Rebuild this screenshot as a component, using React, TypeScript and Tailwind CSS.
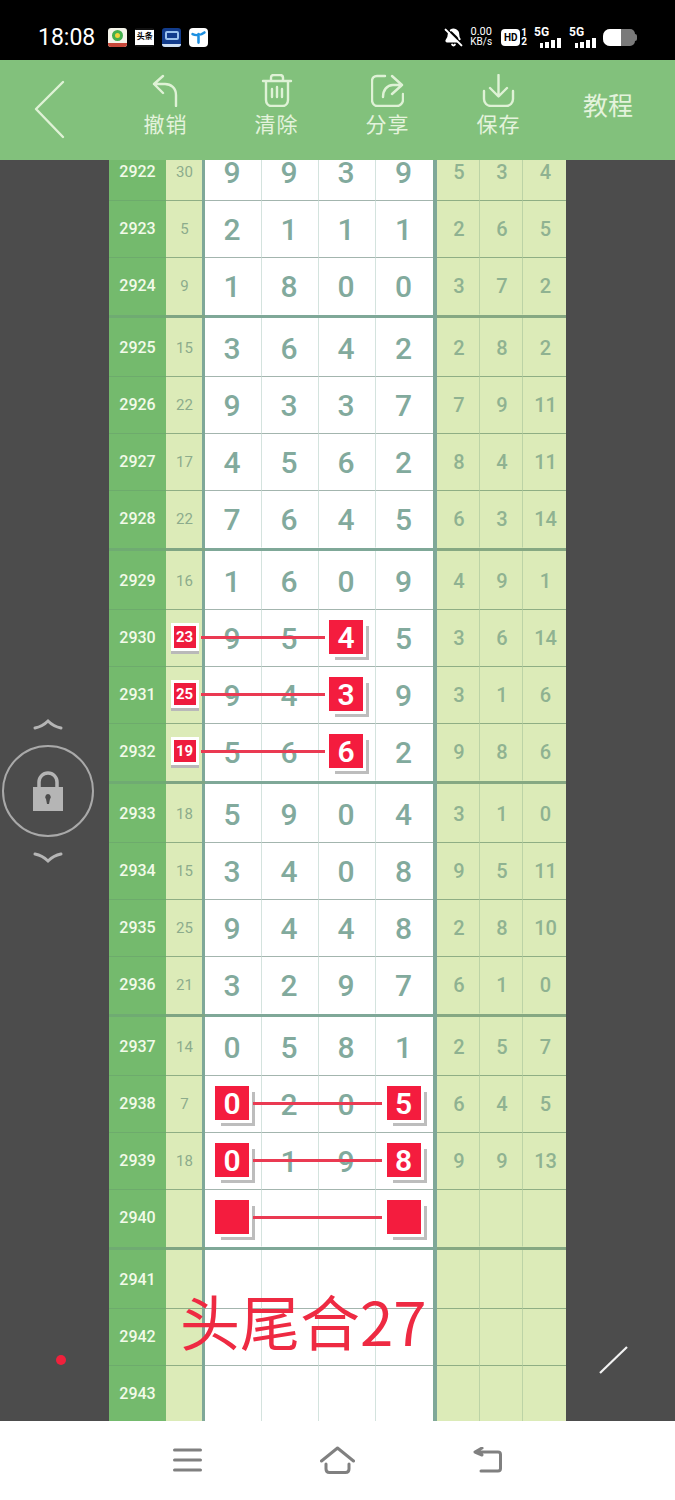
import { BellOff } from "lucide-react"

type Row = {
  id: number
  sum?: string
  nums?: string[]
  right?: string[]
  sumMark?: boolean
  marks?: number[]
  line?: string
}

const L1 = "left-[92px] w-[124px]"
const L2 = "left-[144px] w-[129px]"

const groups: Row[][] = [
  [
    { id: 2922, sum: "30", nums: ["9", "9", "3", "9"], right: ["5", "3", "4"] },
    { id: 2923, sum: "5", nums: ["2", "1", "1", "1"], right: ["2", "6", "5"] },
    { id: 2924, sum: "9", nums: ["1", "8", "0", "0"], right: ["3", "7", "2"] },
  ],
  [
    { id: 2925, sum: "15", nums: ["3", "6", "4", "2"], right: ["2", "8", "2"] },
    { id: 2926, sum: "22", nums: ["9", "3", "3", "7"], right: ["7", "9", "11"] },
    { id: 2927, sum: "17", nums: ["4", "5", "6", "2"], right: ["8", "4", "11"] },
    { id: 2928, sum: "22", nums: ["7", "6", "4", "5"], right: ["6", "3", "14"] },
  ],
  [
    { id: 2929, sum: "16", nums: ["1", "6", "0", "9"], right: ["4", "9", "1"] },
    { id: 2930, sum: "23", nums: ["9", "5", "4", "5"], right: ["3", "6", "14"], sumMark: true, marks: [2], line: L1 },
    { id: 2931, sum: "25", nums: ["9", "4", "3", "9"], right: ["3", "1", "6"], sumMark: true, marks: [2], line: L1 },
    { id: 2932, sum: "19", nums: ["5", "6", "6", "2"], right: ["9", "8", "6"], sumMark: true, marks: [2], line: L1 },
  ],
  [
    { id: 2933, sum: "18", nums: ["5", "9", "0", "4"], right: ["3", "1", "0"] },
    { id: 2934, sum: "15", nums: ["3", "4", "0", "8"], right: ["9", "5", "11"] },
    { id: 2935, sum: "25", nums: ["9", "4", "4", "8"], right: ["2", "8", "10"] },
    { id: 2936, sum: "21", nums: ["3", "2", "9", "7"], right: ["6", "1", "0"] },
  ],
  [
    { id: 2937, sum: "14", nums: ["0", "5", "8", "1"], right: ["2", "5", "7"] },
    { id: 2938, sum: "7", nums: ["0", "2", "0", "5"], right: ["6", "4", "5"], marks: [0, 3], line: L2 },
    { id: 2939, sum: "18", nums: ["0", "1", "9", "8"], right: ["9", "9", "13"], marks: [0, 3], line: L2 },
    { id: 2940, nums: ["", "", "", ""], marks: [0, 3], line: L2 },
  ],
  [{ id: 2941 }, { id: 2942 }, { id: 2943 }],
]

function TableRow({ row, last }: { row: Row; last: boolean }) {
  const nums = row.nums ?? ["", "", "", ""]
  const right = row.right ?? ["", "", ""]
  const lineG = last ? "border-b border-transparent" : "border-b border-[#8fae84]"
  const lineW = last ? "border-b border-transparent" : "border-b border-[#a3b5ae]"
  return (
    <div className="relative flex h-[57px]">
      <div className={`flex w-[57px] items-center justify-center bg-[#74ba6d] text-[16px] font-medium text-[#f2fae9] ${last ? "border-b border-transparent" : "border-b border-[#6dab6c]"}`}>
        {row.id}
      </div>
      <div className={`flex w-[36px] items-center justify-center bg-[#dcebb8] pl-[1px] text-[15px] text-[#8cab8c] ${lineG}`}>
        {row.sumMark ? (
          <div className="mb-[2px] flex h-[22px] w-[22px] items-center justify-center bg-[#ee1c3d] text-[15px] font-bold text-white shadow-[0_0_0_3px_#fff,0_3px_0_3px_#b9b9b9]">
            {row.sum}
          </div>
        ) : (
          row.sum
        )}
      </div>
      <div className="grid w-[235px] grid-cols-4 border-l-[3px] border-r-[4px] border-[#7fa898] bg-white">
        {nums.map((n, i) => (
          <div key={i} className={`flex items-center justify-center pr-[2px] text-[30px] font-medium text-[#82aa9d] ${lineW} ${i < 3 ? "border-r border-r-[#d4e3de]" : ""}`}>
            {row.marks?.includes(i) ? (
              <div className="mb-[2px] flex h-[34px] w-[34px] items-center justify-center bg-[#f41c3e] text-[30px] font-semibold text-white shadow-[3px_3px_0_0_#fff,6px_6px_0_0_#bdbdbd]">
                {n}
              </div>
            ) : (
              n
            )}
          </div>
        ))}
      </div>
      <div className="grid w-[129px] grid-cols-3 bg-[#dcebb8]">
        {right.map((n, i) => (
          <div key={i} className={`flex items-center justify-center pl-[2px] text-[20px] font-medium text-[#8fb291] ${lineG} ${i < 2 ? "border-r border-r-[#bcd3a6]" : ""}`}>
            {n}
          </div>
        ))}
      </div>
      {row.line && <div className={`absolute top-[26px] h-[3px] bg-[#ea3a52] ${row.line}`} />}
    </div>
  )
}

function Separator() {
  return (
    <div>
      <div className="flex h-[3px]">
        <div className="w-[57px] bg-[#6fab72]" />
        <div className="w-[39px] bg-[#7fa583]" />
        <div className="w-[232px] bg-[#7fa898]" />
        <div className="w-[129px] bg-[#86a882]" />
      </div>
      <div className="flex h-[2px]">
        <div className="w-[57px] bg-[#74ba6d]" />
        <div className="w-[36px] bg-[#dcebb8]" />
        <div className="grid w-[235px] grid-cols-4 border-l-[3px] border-r-[4px] border-[#7fa898] bg-white">
          <div className="border-r border-[#d4e3de]" />
          <div className="border-r border-[#d4e3de]" />
          <div className="border-r border-[#d4e3de]" />
          <div />
        </div>
        <div className="grid w-[129px] grid-cols-3 bg-[#dcebb8]">
          <div className="border-r border-[#bcd3a6]" />
          <div className="border-r border-[#bcd3a6]" />
          <div />
        </div>
      </div>
    </div>
  )
}

function AppIcons() {
  return (
    <div className="ml-[13px] flex gap-[8px]">
      <div className="flex h-[19px] w-[19px] flex-col items-center justify-between overflow-hidden rounded-[3px] bg-[#f4f4ea] pt-[2px]">
        <div className="h-[11px] w-[11px] rounded-full border-[3px] border-[#45b04e] bg-[#f2d23a]" />
        <div className="h-[4px] w-full bg-[#c8483a]" />
      </div>
      <div className="flex h-[19px] w-[19px] items-center justify-center overflow-hidden rounded-[2px] border-y-2 border-[#111] bg-white text-[8px] font-bold leading-none text-black">
        头条
      </div>
      <div className="flex h-[19px] w-[19px] flex-col items-center justify-between overflow-hidden rounded-[3px] bg-[#123c8c] pt-[3px]">
        <div className="h-[9px] w-[14px] rounded-[2px] border-2 border-[#9cc3ee]" />
        <div className="h-[3px] w-full bg-[#cfe0f5]" />
      </div>
      <div className="flex h-[19px] w-[19px] items-center justify-center rounded-[4px] bg-white">
        <svg viewBox="0 0 20 20" className="h-[17px] w-[17px]" fill="none" stroke="#1d8fe0" strokeWidth="3" strokeLinecap="round">
          <path d="M3 6c4 2 10 1 14-2M10 6v10" />
        </svg>
      </div>
    </div>
  )
}

function Signal() {
  return (
    <div className="flex w-[27px] flex-col">
      <span className="text-[12px] font-bold leading-[11px] text-white">5G</span>
      <div className="flex items-end justify-end gap-[2px]">
        <div className="h-[5px] w-[3px] bg-white" />
        <div className="h-[6px] w-[4px] bg-white" />
        <div className="h-[8px] w-[4px] bg-white" />
        <div className="h-[10px] w-[4px] bg-white" />
      </div>
    </div>
  )
}

function StatusBar() {
  return (
    <div className="flex h-[60px] items-center bg-black pl-[38px] pr-[38px] pt-[14px] text-white">
      <span className="text-[23px] leading-none">18:08</span>
      <AppIcons />
      <div className="ml-auto flex items-center">
        <BellOff size={19} fill="#fff" strokeWidth={2.5} />
        <div className="ml-[6px] w-[24px] text-center text-[10px] leading-[10px]">
          <div className="text-[11px]">0.00</div>
          <div>KB/s</div>
        </div>
        <div className="ml-[8px] flex h-[17px] w-[19px] items-center justify-center rounded-[4px] bg-white text-[10px] font-bold text-black">HD</div>
        <div className="ml-[1px] mr-[7px] text-[10px] font-bold leading-[9px]">
          <div>1</div>
          <div>2</div>
        </div>
        <Signal />
        <div className="w-[8px]" />
        <Signal />
        <div className="ml-[7px] flex h-[17px] w-[32px] overflow-hidden rounded-l-[7px] rounded-r-[5px] bg-[#7a7a7a]">
          <div className="w-[18px] bg-white" />
        </div>
        <div className="h-[7px] w-[2px] rounded-r-sm bg-[#7a7a7a]" />
      </div>
    </div>
  )
}

function ToolButton({ label, children }: { label: string; children: React.ReactNode }) {
  return (
    <div className="flex w-[111px] flex-col items-center pb-[8px]">
      {children}
      <span className="mt-[5px] text-[21px] leading-[26px] tracking-[1px]">{label}</span>
    </div>
  )
}

const iconProps = {
  fill: "none",
  stroke: "#dff2d6",
  strokeWidth: 2.4,
  strokeLinecap: "round" as const,
  strokeLinejoin: "round" as const,
}

function Header() {
  return (
    <div className="flex h-[100px] items-center bg-[#82c17c] text-[#e4f3dc]">
      <div className="w-[110px] pl-[33px]">
        <svg width="34" height="60" viewBox="0 0 34 60" {...iconProps}>
          <path d="M30 2 3 29l27 28" />
        </svg>
      </div>
      <ToolButton label="撤销">
        <svg width="30" height="33" viewBox="0 0 30 33" {...iconProps}>
          <path d="M12 2 3 10l9 9M3 10h11c6 0 11 4 11 11v11" />
        </svg>
      </ToolButton>
      <ToolButton label="清除">
        <svg width="32" height="33" viewBox="0 0 32 33" {...iconProps}>
          <path d="M2 7h28M10 7V4c0-2 1-3 3-3h6c2 0 3 1 3 3v3M5 7v19c0 3 2 6 5 6h12c3 0 5-3 5-6V7M11 15v8M16 13v10M21 15v8" />
        </svg>
      </ToolButton>
      <ToolButton label="分享">
        <svg width="33" height="33" viewBox="0 0 33 33" {...iconProps}>
          <path d="M14 2H6C3 2 1 4 1 7v19c0 3 2 6 5 6h20c3 0 6-3 6-6v-6M21 2l10 9-10 9M31 11h-9c-6 0-10 5-10 12" />
        </svg>
      </ToolButton>
      <ToolButton label="保存">
        <svg width="33" height="33" viewBox="0 0 33 33" {...iconProps}>
          <path d="M16.5 1v21M8 14l8.500 8.500L25 14M2 17v8c0 4 3 7 7 7h15c4 0 7-3 7-7v-8" />
        </svg>
      </ToolButton>
      <div className="w-[108px] pb-[6px] text-center text-[25px]">教程</div>
    </div>
  )
}

function LeftPanel() {
  return (
    <div className="flex w-[109px] shrink-0 flex-col bg-[#4c4c4c] pt-[558px]">
      <svg className="ml-[33px]" width="30" height="12" viewBox="0 0 30 12" fill="none" stroke="#b5b5b5" strokeWidth="3" strokeLinecap="round">
        <path d="M2 10c5-1 9-3 13-7 4 4 8 6 13 7" />
      </svg>
      <div className="ml-[2px] mt-[15px] flex h-[92px] w-[92px] items-center justify-center rounded-full border-2 border-[#a9a9a9]">
        <svg width="30" height="40" viewBox="0 0 30 40">
          <path d="M6 17v-6a9 9 0 0 1 18 0v6" fill="none" stroke="#b5b5b5" strokeWidth="3.500" />
          <path fillRule="evenodd" fill="#b5b5b5" d="M0 16h30v24H0zM15 23a3 3 0 0 0-2 5l1 5h2l1-5a3 3 0 0 0-2-5z" />
        </svg>
      </div>
      <svg className="ml-[33px] mt-[15px]" width="30" height="12" viewBox="0 0 30 12" fill="none" stroke="#b5b5b5" strokeWidth="3" strokeLinecap="round">
        <path d="M2 2c5 1 9 3 13 7 4-4 8-6 13-7" />
      </svg>
      <div className="ml-[56px] mt-[491px] h-[10px] w-[10px] rounded-full bg-[#f0213c]" />
    </div>
  )
}

function RightPanel() {
  return (
    <div className="flex w-[109px] shrink-0 flex-col bg-[#4c4c4c] pl-[33px] pt-[1186px]">
      <svg width="30" height="28" viewBox="0 0 30 28" fill="none" stroke="#f2f2f2" strokeWidth="2.200">
        <path d="M1 27 28 1" />
      </svg>
    </div>
  )
}

function NavBar() {
  const nav = {
    fill: "none",
    stroke: "#808080",
    strokeWidth: 3,
    strokeLinecap: "round" as const,
    strokeLinejoin: "round" as const,
  }
  return (
    <div className="flex h-[79px] items-center justify-between bg-white px-[173px] pb-[1px]">
      <svg width="29" height="26" viewBox="0 0 29 26" {...nav}>
        <path d="M1.500 3h26M1.500 13h26M1.500 23h26" />
      </svg>
      <svg width="35" height="28" viewBox="0 0 35 28" {...nav}>
        <path d="M1.500 15 17.500 2l16 13M6 18v5c0 2 1 3.500 3.500 3.500h16c2.500 0 3.500-1.500 3.500-3.500v-5" />
      </svg>
      <svg width="29" height="26" viewBox="0 0 29 26" {...nav}>
        <path d="M9 1 2 5l7 3M2 5h23c1.500 0 2.500 1 2.500 2.500v14c0 1.500-1 2.500-2.500 2.500H8" />
      </svg>
    </div>
  )
}

export default function App() {
  return (
    <div className="flex h-[1500px] w-[675px] flex-col overflow-hidden font-['Roboto','Noto_Sans_CJK_SC',sans-serif]">
      <StatusBar />
      <Header />
      <div className="flex h-[1261px]">
        <LeftPanel />
        <div className="relative w-[457px] shrink-0 overflow-hidden">
          <div className="-mt-[16px]">
            {groups.map((g, i) => (
              <div key={i}>
                {g.map((row, j) => (
                  <TableRow key={row.id} row={row} last={j === g.length - 1} />
                ))}
                {i < groups.length - 1 && <Separator />}
              </div>
            ))}
          </div>
          <div className="absolute left-[71px] top-[1120px] whitespace-nowrap font-['Noto_Sans_CJK_SC',sans-serif] text-[60px] leading-[80px] text-[#ee2a42]">
            头尾合27
          </div>
        </div>
        <RightPanel />
      </div>
      <NavBar />
    </div>
  )
}
